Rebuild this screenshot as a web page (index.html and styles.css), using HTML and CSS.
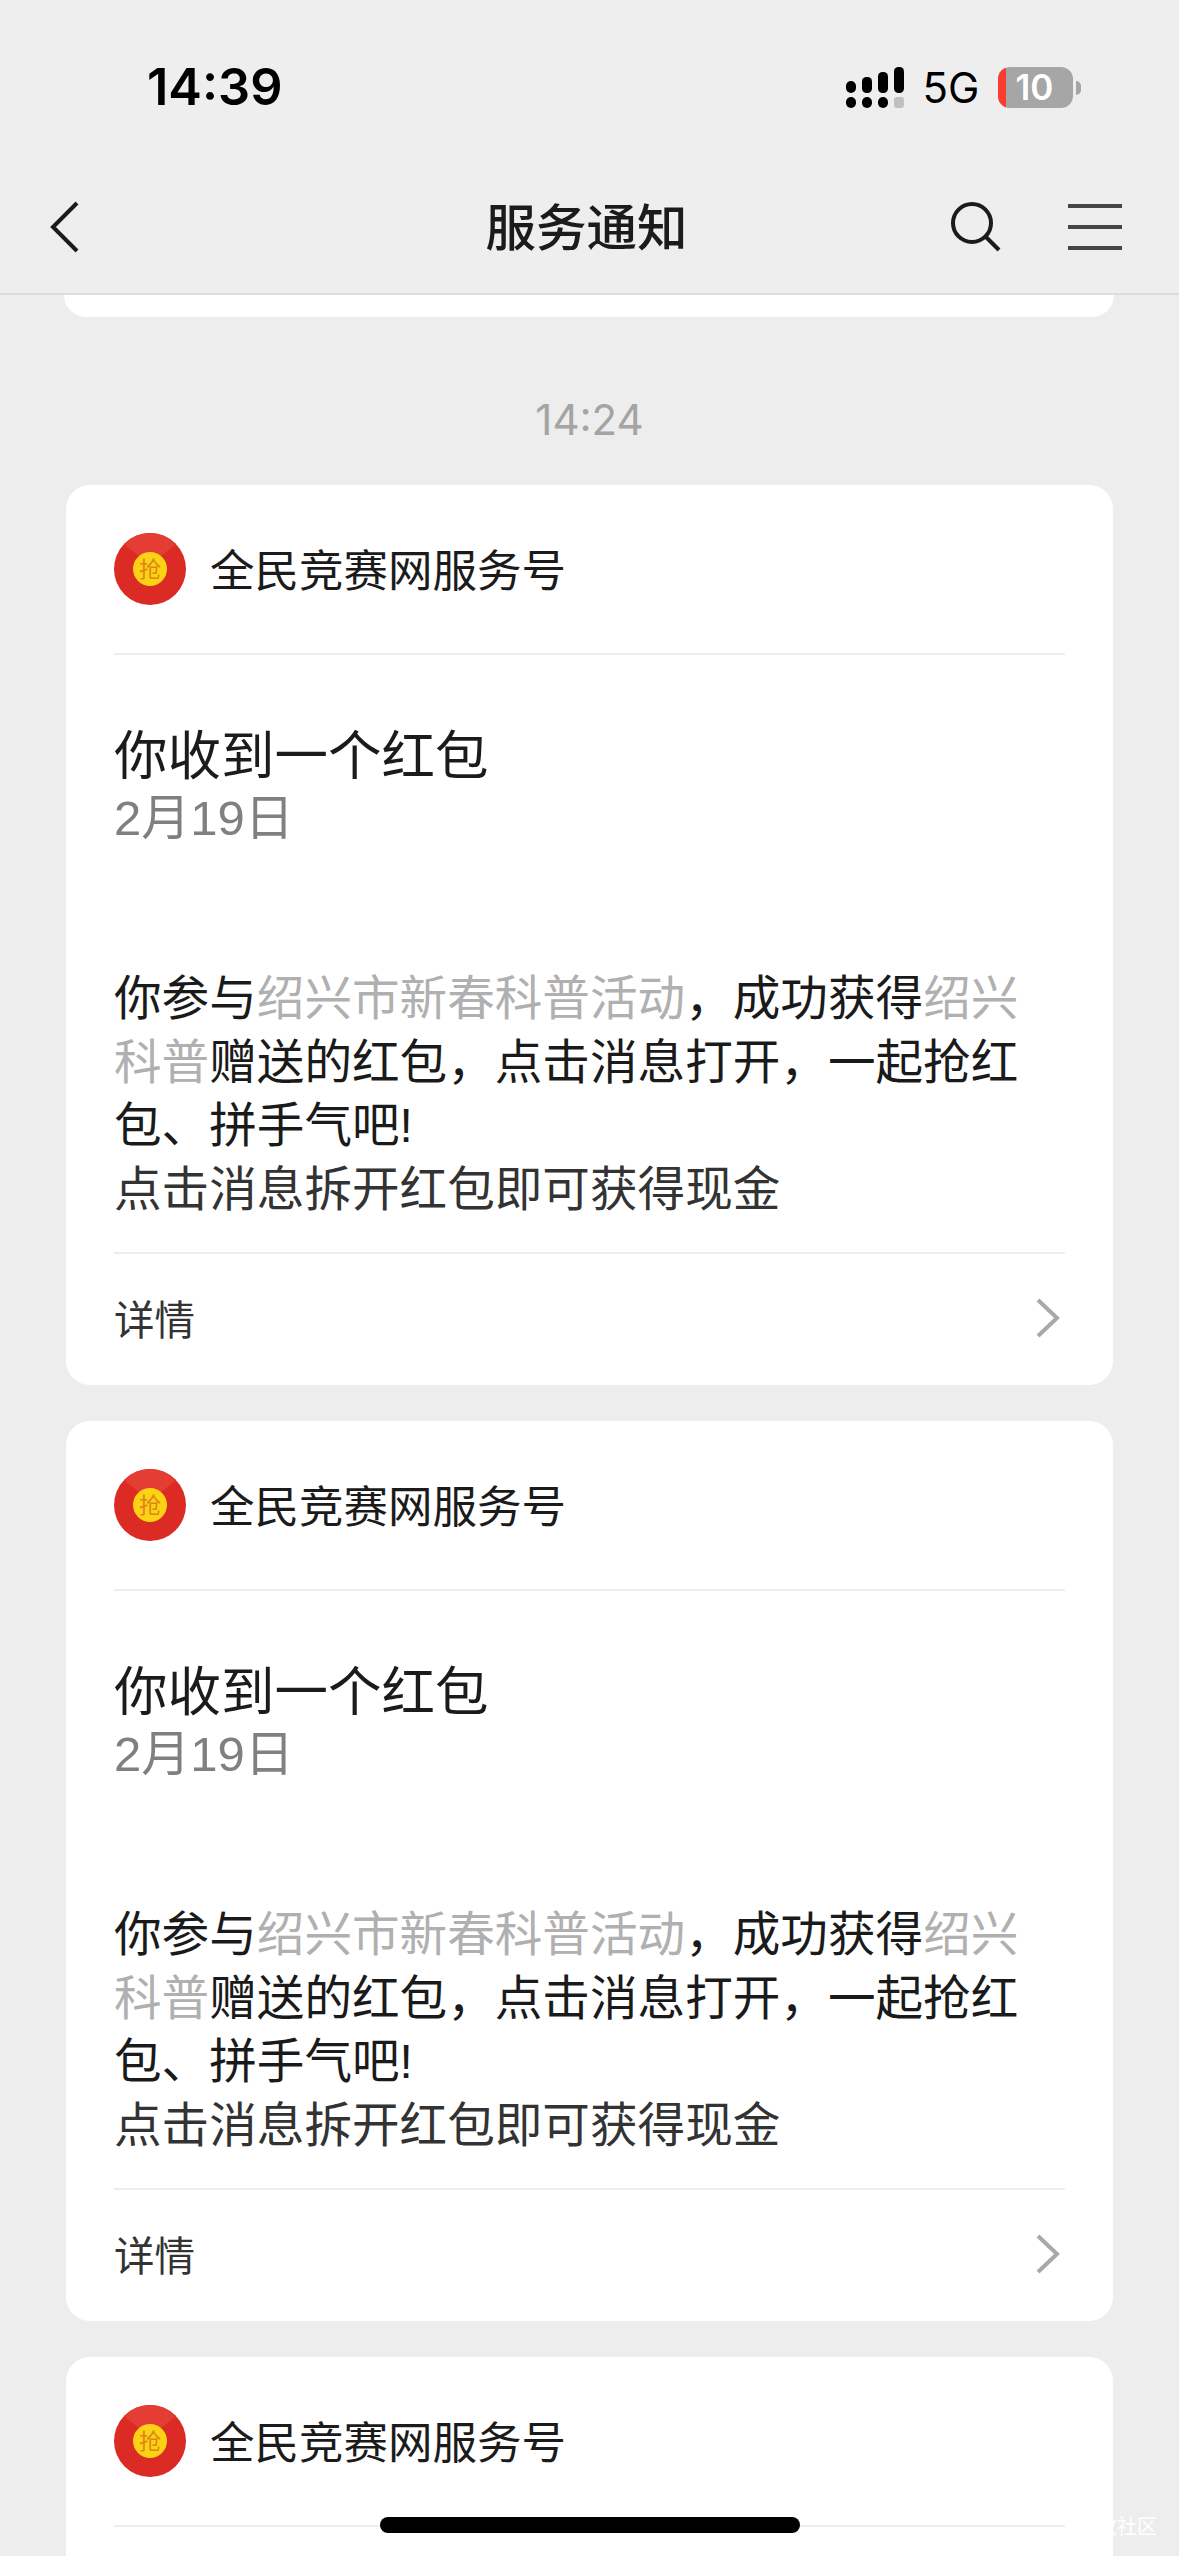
FILE: index.html
```html
<!DOCTYPE html>
<html lang="zh-CN">
<head>
    <meta charset="UTF-8">
    <meta name="viewport" content="width=device-width, initial-scale=1.0">
    <title>服务通知</title>
    <link rel="stylesheet" href="styles.css">
</head>
<body>
    <div class="page">
        <header class="top">
            <div class="status">
                <span class="clock">14:39</span>
                <div class="status-right">
                    <svg class="signal" width="58" height="41" viewBox="0 0 58 41">
                        <rect x="0" y="14" width="10" height="12" rx="5"/>
                        <rect x="16" y="10" width="10" height="16" rx="4.5"/>
                        <rect x="32" y="5" width="10" height="21" rx="4.5"/>
                        <rect x="48" y="0" width="10" height="26" rx="4.5"/>
                        <rect x="0" y="30" width="10" height="11" rx="5"/>
                        <rect x="16" y="30" width="10" height="11" rx="5"/>
                        <rect x="32" y="30" width="10" height="11" rx="5"/>
                        <rect class="signal-off" x="48" y="30" width="10" height="11" rx="3"/>
                    </svg>
                    <span class="net">5G</span>
                    <div class="battery">
                        <div class="battery-low"></div>
                        <span class="battery-num">10</span>
                    </div>
                    <div class="battery-cap"></div>
                </div>
            </div>
            <nav class="nav">
                <svg class="back" width="30" height="52" viewBox="0 0 30 52">
                    <path d="M27 2 L3 26 L27 50" fill="none" stroke="#1b1b1b" stroke-width="4"/>
                </svg>
                <h1 class="nav-title">服务通知</h1>
                <svg class="search" width="52" height="52" viewBox="0 0 52 52">
                    <circle cx="22" cy="22" r="19" fill="none" stroke="#1b1b1b" stroke-width="4"/>
                    <path d="M35 35 L49 49" stroke="#1b1b1b" stroke-width="4"/>
                </svg>
                <div class="menu"><i></i><i></i><i></i></div>
            </nav>
        </header>

        <main class="list">
            <div class="card-tail"></div>
            <div class="time">14:24</div>

            <section class="card">
                <div class="card-head">
                    <svg class="avatar" width="72" height="72" viewBox="0 0 72 72">
                        <circle cx="36" cy="36" r="36" fill="#dc2a25"/>
                        <path d="M10 11 A36 36 0 0 1 62 11 L46 24 Q36 28 26 24Z" fill="#e43d33"/>
                        <circle cx="36" cy="36" r="17" fill="#fbd214"/>
                        <text x="36" y="44" text-anchor="middle" font-size="22" fill="#df8418">抢</text>
                    </svg>
                    <span class="card-name">全民竞赛网服务号</span>
                </div>
                <div class="card-main">
                    <h2 class="card-title">你收到一个红包</h2>
                    <div class="card-date">2月19日</div>
                    <p class="card-text">你参与<span class="muted">绍兴市新春科普活动</span>，成功获得<span class="muted">绍兴</span><br><span class="muted">科普</span>赠送的红包，点击消息打开，一起抢红<br>包、拼手气吧!</p>
                    <p class="card-text soft">点击消息拆开红包即可获得现金</p>
                </div>
                <div class="card-foot">
                    <span>详情</span>
                    <svg width="26" height="40" viewBox="0 0 26 40">
                        <path d="M3 2 L22 20 L3 38" fill="none" stroke="#a9a9a9" stroke-width="4"/>
                    </svg>
                </div>
            </section>

            <section class="card">
                <div class="card-head">
                    <svg class="avatar" width="72" height="72" viewBox="0 0 72 72">
                        <circle cx="36" cy="36" r="36" fill="#dc2a25"/>
                        <path d="M10 11 A36 36 0 0 1 62 11 L46 24 Q36 28 26 24Z" fill="#e43d33"/>
                        <circle cx="36" cy="36" r="17" fill="#fbd214"/>
                        <text x="36" y="44" text-anchor="middle" font-size="22" fill="#df8418">抢</text>
                    </svg>
                    <span class="card-name">全民竞赛网服务号</span>
                </div>
                <div class="card-main">
                    <h2 class="card-title">你收到一个红包</h2>
                    <div class="card-date">2月19日</div>
                    <p class="card-text">你参与<span class="muted">绍兴市新春科普活动</span>，成功获得<span class="muted">绍兴</span><br><span class="muted">科普</span>赠送的红包，点击消息打开，一起抢红<br>包、拼手气吧!</p>
                    <p class="card-text soft">点击消息拆开红包即可获得现金</p>
                </div>
                <div class="card-foot">
                    <span>详情</span>
                    <svg width="26" height="40" viewBox="0 0 26 40">
                        <path d="M3 2 L22 20 L3 38" fill="none" stroke="#a9a9a9" stroke-width="4"/>
                    </svg>
                </div>
            </section>

            <section class="card">
                <div class="card-head">
                    <svg class="avatar" width="72" height="72" viewBox="0 0 72 72">
                        <circle cx="36" cy="36" r="36" fill="#dc2a25"/>
                        <path d="M10 11 A36 36 0 0 1 62 11 L46 24 Q36 28 26 24Z" fill="#e43d33"/>
                        <circle cx="36" cy="36" r="17" fill="#fbd214"/>
                        <text x="36" y="44" text-anchor="middle" font-size="22" fill="#df8418">抢</text>
                    </svg>
                    <span class="card-name">全民竞赛网服务号</span>
                </div>
            </section>
        </main>

        <div class="home-bar"></div>
        <div class="mark">收社区</div>
    </div>
</body>
</html>
```

FILE: styles.css
```css
* {
    box-sizing: border-box;
}

body {
    margin: 0;
    background: #ededed;
    font-family: "Liberation Sans", "Noto Sans CJK SC", sans-serif;
    color: #1b1b1b;
}

.page {
    position: relative;
    width: 1179px;
    height: 2556px;
    overflow: hidden;
}

/* top bar */
.top {
    height: 295px;
    background: #eeeeee;
    border-bottom: 2px solid #dcdcdc;
}

.status {
    height: 170px;
    padding: 67px 0 0 147px;
    display: flex;
    align-items: flex-start;
}

.clock {
    font-family: Inter, sans-serif;
    font-size: 50.5px;
    font-weight: 600;
    line-height: 40px;
    color: #000;
}

.status-right {
    margin-left: 563px;
    display: flex;
    align-items: center;
    height: 41px;
}

.signal {
    fill: #000;
}

.signal-off {
    fill: #c0c0c0;
}

.net {
    margin-left: 19px;
    font-family: Inter, sans-serif;
    font-size: 42px;
    line-height: 41px;
    color: #000;
}

.battery {
    margin-left: 19px;
    width: 75px;
    height: 41px;
    border-radius: 12px;
    background: #a6a6a6;
    display: flex;
    overflow: hidden;
}

.battery-low {
    width: 8px;
    background: #fb3c30;
}

.battery-num {
    margin-left: 9px;
    font-family: Inter, sans-serif;
    font-size: 35px;
    font-weight: 600;
    line-height: 41px;
    color: #fff;
}

.battery-cap {
    margin-left: 3px;
    width: 5px;
    height: 14px;
    background: #a6a6a6;
    border-radius: 0 7px 7px 0;
}

.nav {
    position: relative;
    height: 123px;
    padding: 0 0 10px 50px;
    display: flex;
    align-items: center;
}

.nav-title {
    margin: 0;
    padding-right: 6px;
    position: absolute;
    left: 0;
    right: 0;
    top: 21px;
    text-align: center;
    font-size: 50.5px;
    font-weight: 500;
    line-height: 66px;
    font-family: "Noto Sans CJK SC", sans-serif;
}

.search {
    margin-left: 870px;
}

.menu {
    margin-left: 66px;
    width: 54px;
    height: 46px;
    display: flex;
    flex-direction: column;
    justify-content: space-between;
}

.menu i {
    height: 4px;
    background: #454545;
}

/* message list */
.list {
    padding: 0 66px;
}

.card-tail {
    margin: 0 -1px 0 -2px;
    height: 22px;
    background: #fff;
    border-radius: 0 0 24px 24px;
}

.time {
    margin-top: 79px;
    text-align: center;
    font-family: Inter, sans-serif;
    font-size: 42px;
    line-height: 48px;
    color: #a4a4a4;
}

.card {
    margin-top: 41px;
    margin-bottom: -5px;
    height: 900px;
    background: #fff;
    border-radius: 24px;
    padding: 0 48px;
}

.card-head {
    height: 170px;
    border-bottom: 2px solid #ededed;
    display: flex;
    align-items: center;
}

.card-name {
    margin-left: 24px;
    margin-top: -2px;
    font-family: "Noto Sans CJK SC", sans-serif;
    font-size: 44.5px;
    line-height: 60px;
}

.card-main {
    height: 599px;
    padding-top: 62px;
    border-bottom: 2px solid #ededed;
}

.card-title {
    margin: 0;
    font-family: "Noto Sans CJK SC", sans-serif;
    font-size: 53.5px;
    font-weight: 400;
    line-height: 70px;
}

.card-date {
    margin-top: 1px;
    font-size: 49px;
    line-height: 60px;
    color: #808080;
}

/* Latin face first: keeps the inline boxes within the 63.5px line */
.card-text {
    margin: 0;
    font-size: 47.6px;
    line-height: 63.5px;
    color: #1a1a1a;
}

.card-date + .card-text {
    margin-top: 119px;
}

.soft {
    color: #333;
}

.muted {
    color: #b0b0b0;
}

.card-foot {
    height: 129px;
    padding: 0 4px 2px 0;
    display: flex;
    justify-content: space-between;
    align-items: center;
    font-family: "Noto Sans CJK SC", sans-serif;
    font-size: 40.5px;
    color: #333;
}

/* overlays */
.home-bar {
    position: absolute;
    left: 380px;
    top: 2517px;
    width: 420px;
    height: 16px;
    border-radius: 8px;
    background: #000;
}

.mark {
    position: absolute;
    right: 22px;
    top: 2511px;
    font-family: "Noto Sans CJK SC", sans-serif;
    font-size: 20px;
    color: #fff;
}
```
